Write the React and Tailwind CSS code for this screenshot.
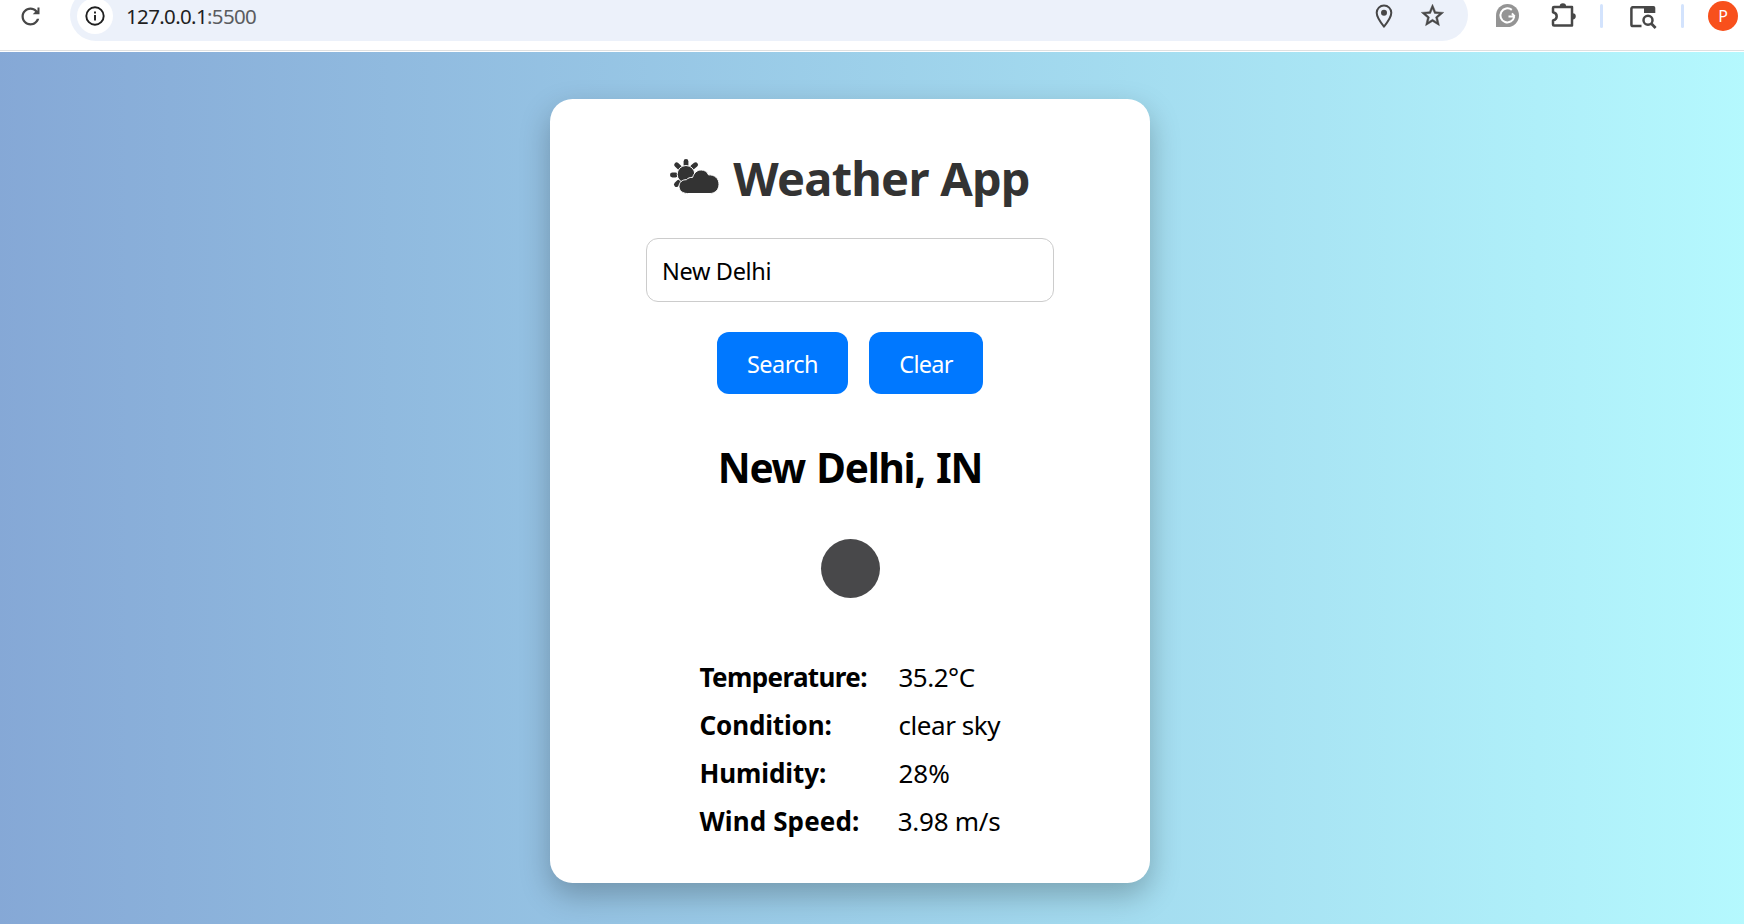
import React from "react";

function ReloadIcon() {
  return (
    <svg className="size-[27px] shrink-0" viewBox="0 0 24 24" fill="#474747">
      <path d="M17.65 6.35C16.2 4.9 14.21 4 12 4c-4.42 0-7.99 3.58-7.99 8s3.57 8 7.99 8c3.73 0 6.84-2.55 7.73-6h-2.08c-.82 2.33-3.04 4-5.65 4-3.31 0-6-2.69-6-6s2.69-6 6-6c1.66 0 3.14.69 4.22 1.78L14 10h6V4h-1.8v2.9z" />
    </svg>
  );
}

function InfoIcon() {
  return (
    <svg className="size-5" viewBox="0 0 20 20" fill="none" stroke="#1f1f1f" strokeWidth="1.9">
      <circle cx="10" cy="10" r="8.7" />
      <path d="M10 8.9v5.6M10 5.4v2" />
    </svg>
  );
}

function PinIcon() {
  return (
    <svg className="h-6 w-[18px] shrink-0" viewBox="0 0 18 24" fill="none" stroke="#474747" strokeWidth="2">
      <path d="M9 22.6C4.6 17.2 1.7 13.3 1.7 8.8a7.3 7.3 0 0 1 14.6 0c0 4.5-2.9 8.4-7.3 13.8z" strokeLinejoin="round" />
      <circle cx="9" cy="8.8" r="3" fill="#474747" stroke="none" />
    </svg>
  );
}

function StarIcon() {
  return (
    <svg className="size-[27px] shrink-0" viewBox="0 0 24 24" fill="#474747" stroke="#474747" strokeWidth="0.4">
      <path d="M22 9.24l-7.19-.62L12 2 9.19 8.63 2 9.24l5.46 4.73L5.82 21 12 17.27 18.18 21l-1.63-7.03L22 9.24zM12 15.4l-3.76 2.27 1-4.28-3.32-2.88 4.38-.38L12 6.1l1.71 4.04 4.38.38-3.32 2.88 1 4.28L12 15.4z" />
    </svg>
  );
}

function GrammarIcon() {
  return (
    <svg className="size-[23px] shrink-0" viewBox="0 0 23 23" fill="none">
      <path d="M0 23V11.5A11.5 11.5 0 1 1 11.5 23z" fill="#949494" />
      <path d="M15.8 5.9A7 7 0 1 0 18.3 12.6M18.9 12.4h-6.4M15.9 9.3l2.8 3.1" stroke="#fff" strokeWidth="2" />
    </svg>
  );
}

function PuzzleIcon() {
  return (
    <svg className="size-[25px] shrink-0" viewBox="0 0 25 25">
      <path
        d="M3 4h18v18.500H3a1 1 0 0 1-1-1v-4.100c2.400-.5 3.700-2 3.700-4.100S4.400 9.700 2 9.200V5a1 1 0 0 1 1-1z"
        fill="none"
        stroke="#474747"
        strokeWidth="2.500"
        strokeLinejoin="round"
      />
      <path d="M8.700 3.500a3.200 3.200 0 0 1 6.400 0zM21.700 10.200a3.100 3.100 0 0 1 0 6.200z" fill="#474747" />
    </svg>
  );
}

function TabSearchIcon() {
  return (
    <svg className="h-[23px] w-[27px] shrink-0" viewBox="0 0 27 23" fill="none" stroke="#474747" strokeWidth="2.500">
      <path d="M11.500 20H3a1.600 1.600 0 0 1-1.600-1.600V2.800A1.600 1.600 0 0 1 3 1.200h12" />
      <path d="M14 0h9.500A1.800 1.800 0 0 1 25.300 1.800V7H14z" fill="#474747" stroke="none" />
      <circle cx="18" cy="14.300" r="4.500" />
      <path d="M21 17.300l4.600 4.600" strokeWidth="2.800" />
    </svg>
  );
}

function SunCloudIcon() {
  return (
    <svg className="mb-[4px] h-[35px] w-[49px] shrink-0" viewBox="0 0 49 35">
      <g stroke="#333" strokeWidth="4.800">
        <path d="M16 6.200V2.400" strokeLinecap="round" />
        <path d="M9.700 8.700L6.600 5.800M22.600 8.200L25.600 5.700M5.500 16H2.400M8.700 23.200L6.400 25.500" strokeLinecap="round" />
      </g>
      <circle cx="16" cy="15.300" r="8.800" fill="#333" stroke="#fff" strokeWidth="1" />
      <path
        d="M17.500 34.500C12.500 34.500 9 31.500 9 27.400c0-4 3.200-6.900 7.400-6.700 1.500-1.600 3.600-2.500 6.200-2.300C24 13.500 27.300 11 31.200 11c3.400 0 6.200 1.800 7.300 4.900C44.600 15.500 49 19.500 49 25.200c0 5.500-3.900 9.300-9 9.300z"
        fill="#333"
        stroke="#fff"
        strokeWidth="1"
      />
    </svg>
  );
}

function BrowserBar() {
  return (
    <header className="flex h-[52px] items-start overflow-hidden bg-white">
      <div className="flex h-[51px] w-full items-start border-b border-[#dfe0e1]">
        <div className="flex h-[31px] w-[70px] items-center pl-[17px] pt-px">
          <ReloadIcon />
        </div>
        <div className="-mt-[11px] flex h-[52px] w-[1398px] items-center rounded-full bg-[#ecf1fa] pl-[7px] pr-[22.5px] pt-px">
          <div className="flex size-9 items-center justify-center rounded-full bg-white">
            <InfoIcon />
          </div>
          <p className="ml-[13px] flex-1 text-[20.5px] leading-[30px] tracking-[-0.65px] text-[#1f1f1f]">
            127.0.0.1<span className="text-[#5a5c60]">:5500</span>
          </p>
          <PinIcon />
          <span className="w-[26px]" />
          <StarIcon />
        </div>
        <div className="flex h-[31px] items-center pl-[28px]">
          <GrammarIcon />
          <span className="w-[32px]" />
          <PuzzleIcon />
          <span className="ml-[24px] h-6 w-[3px] rounded-full bg-[#d3e3fd]" />
          <span className="w-[27px]" />
          <div className="pt-[3px]">
            <TabSearchIcon />
          </div>
          <span className="ml-[24px] h-6 w-[3px] rounded-full bg-[#d3e3fd]" />
          <span className="ml-[24px] flex size-[30px] items-center justify-center rounded-full bg-[#f8501c] text-[16px] text-white">
            P
          </span>
        </div>
      </div>
    </header>
  );
}

const readings = [
  { label: "Temperature:", value: "35.2°C", labelClass: "tracking-[-0.62px]", valueClass: "tracking-[-0.5px]" },
  { label: "Condition:", value: "clear sky", labelClass: "tracking-[-0.15px]", valueClass: "tracking-[-0.45px]" },
  { label: "Humidity:", value: "28%", labelClass: "tracking-[-0.1px]", valueClass: "tracking-[0px]" },
  { label: "Wind Speed:", value: "3.98 m/s", labelClass: "tracking-[0.13px]", valueClass: "tracking-[-0.25px]" },
];

export default function App() {
  return (
    <div className="flex h-[924px] w-[1744px] flex-col overflow-hidden font-['Noto_Sans','Open_Sans',sans-serif]">
      <BrowserBar />
      <main className="flex-1 bg-[linear-gradient(to_right,#83a4d4_-90px,#b6fbff_1800px)] pl-[550px] pt-[47px]">
        <section className="flex h-[784px] w-[600px] flex-col items-center rounded-[22.5px] bg-white pt-[47px] shadow-[0_12px_30px_rgba(0,0,0,0.25)]">
          <h1 className="flex h-16 items-center gap-[14px] text-[47px] font-bold leading-[64px] tracking-[-0.75px] text-[#333]">
            <SunCloudIcon />
            Weather App
          </h1>
          <input
            className="mt-[28px] h-16 w-[408px] rounded-xl border border-[#ccc] bg-white pl-[15px] pt-[2px] text-[23.5px] tracking-[-0.35px] text-black outline-none"
            defaultValue="New Delhi"
          />
          <div className="mt-[30px] flex gap-[21px]">
            <button className="h-[62px] w-[131px] rounded-xl bg-[#0078ff] pt-[3px] text-[23.5px] tracking-[-0.55px] text-white">
              Search
            </button>
            <button className="h-[62px] w-[114px] rounded-xl bg-[#0078ff] pt-[3px] text-[23.5px] tracking-[-0.75px] text-white">
              Clear
            </button>
          </div>
          <h2 className="mt-[46px] text-[40.5px] font-bold leading-[56px] tracking-[-1.25px] text-black [word-spacing:2px]">
            New Delhi, IN
          </h2>
          <div className="flex h-[145px] items-center">
            <span className="size-[59px] rounded-full bg-[#48484a]" />
          </div>
          <dl className="mt-[12px] w-[301px] text-black">
            {readings.map((r) => (
              <div key={r.label} className="flex h-12 items-center">
                <dt className={`w-[199px] whitespace-nowrap pt-px text-[26px] font-bold ${r.labelClass}`}>{r.label}</dt>
                <dd className={`whitespace-nowrap text-[26px] ${r.valueClass}`}>{r.value}</dd>
              </div>
            ))}
          </dl>
        </section>
      </main>
    </div>
  );
}
